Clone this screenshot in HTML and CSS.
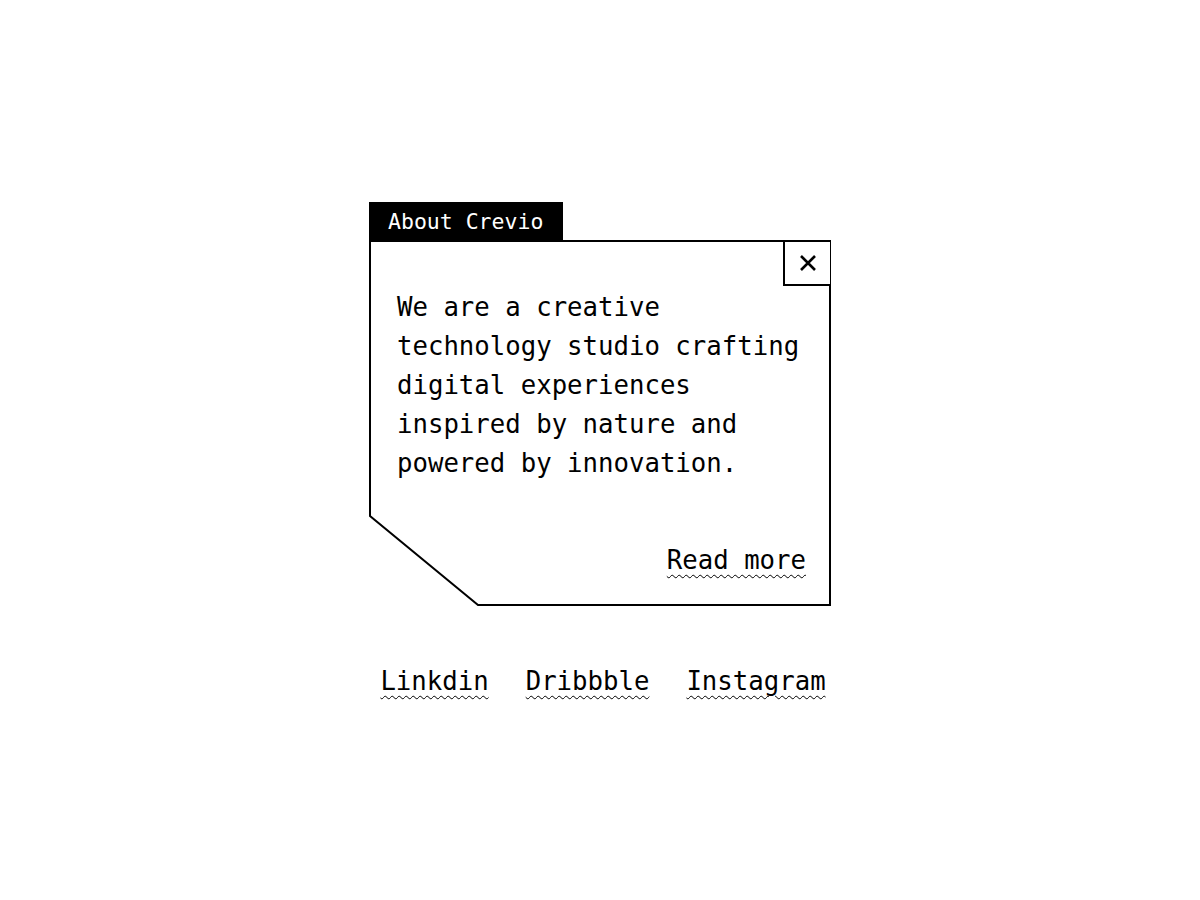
FILE: index.html
```html
<!DOCTYPE html>
<html lang="en">
<head>
<meta charset="utf-8">
<title>About Crevio</title>
<link rel="stylesheet" href="styles.css">
</head>
<body>
<main class="page">
  <section class="card">
    <div class="tab">About Crevio</div>
    <div class="panel">
      <svg class="outline" width="462" height="366" viewBox="0 0 462 366" aria-hidden="true">
        <path d="M1 1 H461 V365 H109 L1 276 Z" fill="none" stroke="#000" stroke-width="2" stroke-linejoin="miter"/>
      </svg>
      <button class="close" type="button" aria-label="Close">
        <svg width="18" height="18" viewBox="0 0 18 18" aria-hidden="true">
          <path d="M2 2 L16 16 M16 2 L2 16" stroke="#000" stroke-width="2.6" fill="none"/>
        </svg>
      </button>
      <p class="text">We are a creative technology studio crafting digital experiences inspired by nature and powered by innovation.</p>
      <div class="more-row"><a class="link" href="#">Read more</a></div>
    </div>
  </section>
  <nav class="social">
    <a class="link" href="#">Linkdin</a>
    <a class="link" href="#">Dribbble</a>
    <a class="link" href="#">Instagram</a>
  </nav>
</main>
</body>
</html>
```
FILE: styles.css
```css
* { box-sizing: border-box; }
html, body { margin: 0; padding: 0; background: #fff; }
body {
  font-family: "DejaVu Sans Mono", "Liberation Mono", monospace;
  color: #000;
}
.page {
  height: 900px;
  padding-bottom: 2px;
  display: flex;
  flex-direction: column;
  align-items: center;
  justify-content: center;
}
.card {
  width: 462px;
  display: flex;
  flex-direction: column;
  align-items: flex-start;
}
.tab {
  width: 194px;
  height: 39px;
  background: #000;
  color: #fff;
  font-size: 21.5px;
  line-height: 39px;
  padding-left: 19px;
  margin-bottom: -1px;
  position: relative;
  z-index: 1;
}
.panel {
  position: relative;
  width: 462px;
  height: 366px;
  padding: 48px 25px 31px 28px;
  display: flex;
  flex-direction: column;
}
.outline {
  position: absolute;
  left: 0;
  top: 0;
  pointer-events: none;
}
.close {
  position: absolute;
  top: 0;
  right: 1px;
  width: 47px;
  height: 46px;
  padding: 0;
  margin: 0;
  background: #fff;
  border: none;
  border-left: 2px solid #000;
  border-bottom: 2px solid #000;
  border-top: 2px solid #000;
  display: flex;
  align-items: center;
  justify-content: center;
  cursor: pointer;
}
.text {
  margin: 0;
  font-size: 25.7px;
  line-height: 39px;
}
.more-row {
  margin-top: auto;
  display: flex;
  justify-content: flex-end;
}
.link {
  color: #000;
  font-size: 25.7px;
  line-height: 30px;
  text-decoration-line: underline;
  text-decoration-style: wavy;
  text-decoration-thickness: 1px;
  text-underline-offset: 5px;
}
.social {
  margin-top: 60px;
  width: 462px;
  padding-left: 6px;
  display: flex;
  justify-content: center;
  gap: 37px;
}
```
